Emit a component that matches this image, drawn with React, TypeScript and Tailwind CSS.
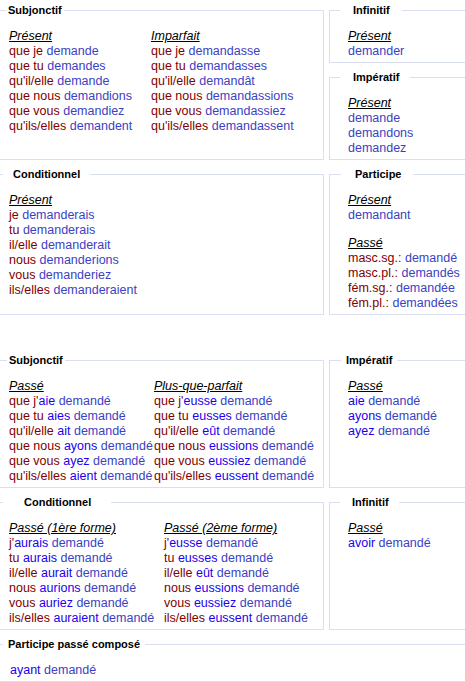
import React from 'react';

type Line = [string, string, string];

const Conj: React.FC<{ line: Line }> = ({ line }) => (
  <div className="whitespace-pre">
    <span className="text-[#800000]">{line[0]}</span>
    {line[1] && <span className="text-[#2200ee]">{line[1]}</span>}
    <span className="text-[#3b42c2]">{line[2]}</span>
  </div>
);

const Label: React.FC<{ children: React.ReactNode }> = ({ children }) => (
  <div className="italic underline text-black whitespace-pre">{children}</div>
);

const Block: React.FC<{ title: string; lines: Line[] }> = ({ title, lines }) => (
  <div>
    <Label>{title}</Label>
    {lines.map((l, i) => (
      <Conj key={i} line={l} />
    ))}
  </div>
);

const Box: React.FC<{
  legend: string;
  legendClass: string;
  className?: string;
  bodyClass?: string;
  children: React.ReactNode;
}> = ({ legend, legendClass, className = '', bodyClass = 'pl-[9px]', children }) => (
  <fieldset className={`border border-[#dadff0] ${className}`}>
    <legend className={`text-[11px] leading-[13px] font-bold text-black ${legendClass}`}>{legend}</legend>
    <div className={`pt-[12px] pb-[3px] ${bodyClass}`}>{children}</div>
  </fieldset>
);

const subjPresent: Line[] = [
  ['que je ', '', 'demande'],
  ['que tu ', '', 'demandes'],
  ["qu'il/elle ", '', 'demande'],
  ['que nous ', '', 'demandions'],
  ['que vous ', '', 'demandiez'],
  ["qu'ils/elles ", '', 'demandent'],
];

const subjImparfait: Line[] = [
  ['que je ', '', 'demandasse'],
  ['que tu ', '', 'demandasses'],
  ["qu'il/elle ", '', 'demandât'],
  ['que nous ', '', 'demandassions'],
  ['que vous ', '', 'demandassiez'],
  ["qu'ils/elles ", '', 'demandassent'],
];

const condPresent: Line[] = [
  ['je ', '', 'demanderais'],
  ['tu ', '', 'demanderais'],
  ['il/elle ', '', 'demanderait'],
  ['nous ', '', 'demanderions'],
  ['vous ', '', 'demanderiez'],
  ['ils/elles ', '', 'demanderaient'],
];

const subjPasse: Line[] = [
  ["que j'", 'aie ', 'demandé'],
  ['que tu ', 'aies ', 'demandé'],
  ["qu'il/elle ", 'ait ', 'demandé'],
  ['que nous ', 'ayons ', 'demandé'],
  ['que vous ', 'ayez ', 'demandé'],
  ["qu'ils/elles ", 'aient ', 'demandé'],
];

const subjPlusQue: Line[] = [
  ["que j'", 'eusse ', 'demandé'],
  ['que tu ', 'eusses ', 'demandé'],
  ["qu'il/elle ", 'eût ', 'demandé'],
  ['que nous ', 'eussions ', 'demandé'],
  ['que vous ', 'eussiez ', 'demandé'],
  ["qu'ils/elles ", 'eussent ', 'demandé'],
];

const condPasse1: Line[] = [
  ["j'", 'aurais ', 'demandé'],
  ['tu ', 'aurais ', 'demandé'],
  ['il/elle ', 'aurait ', 'demandé'],
  ['nous ', 'aurions ', 'demandé'],
  ['vous ', 'auriez ', 'demandé'],
  ['ils/elles ', 'auraient ', 'demandé'],
];

const condPasse2: Line[] = [
  ["j'", 'eusse ', 'demandé'],
  ['tu ', 'eusses ', 'demandé'],
  ['il/elle ', 'eût ', 'demandé'],
  ['nous ', 'eussions ', 'demandé'],
  ['vous ', 'eussiez ', 'demandé'],
  ['ils/elles ', 'eussent ', 'demandé'],
];

export default function App() {
  return (
    <div className="w-[465px] h-[682px] overflow-hidden bg-white pt-1 text-[12.5px] leading-[15px] font-['Liberation_Sans',Arial,sans-serif]">
      {/* simple tenses */}
      <div className="flex gap-[5px]">
        <Box legend="Subjonctif" legendClass="ml-[6px] px-[2px]" className="w-[324px] border-l-0">
          <div className="grid grid-cols-[142px_1fr]">
            <Block title="Présent" lines={subjPresent} />
            <Block title="Imparfait" lines={subjImparfait} />
          </div>
        </Box>
        <div className="flex-1 flex flex-col gap-2">
          <Box legend="Infinitif" legendClass="ml-[10px] pl-[13px] pr-[12px]" className="border-r-0" bodyClass="pl-[18px]">
            <Block title="Présent" lines={[['', '', 'demander']]} />
          </Box>
          <Box legend="Impératif" legendClass="ml-[10px] pl-[13px] pr-[11px]" className="border-r-0" bodyClass="pl-[18px]">
            <Block title="Présent" lines={[['', '', 'demande'], ['', '', 'demandons'], ['', '', 'demandez']]} />
          </Box>
        </div>
      </div>

      <div className="flex gap-[5px] mt-2">
        <Box legend="Conditionnel" legendClass="ml-[3px] px-[10px]" className="w-[324px] border-l-0">
          <Block title="Présent" lines={condPresent} />
        </Box>
        <Box legend="Participe" legendClass="ml-[11px] pl-[14px] pr-[12px]" className="flex-1 border-r-0" bodyClass="pl-[18px]">
          <Block title="Présent" lines={[['', '', 'demandant']]} />
          <div className="mt-[13px]">
            <Block
              title="Passé"
              lines={[
                ['masc.sg.: ', '', 'demandé'],
                ['masc.pl.: ', '', 'demandés'],
                ['fém.sg.: ', '', 'demandée'],
                ['fém.pl.: ', '', 'demandées'],
              ]}
            />
          </div>
        </Box>
      </div>

      {/* compound tenses */}
      <div className="flex gap-[5px] mt-[39px]">
        <Box legend="Subjonctif" legendClass="ml-[7px] px-[2px]" className="w-[324px] border-l-0">
          <div className="grid grid-cols-[145px_1fr]">
            <Block title="Passé" lines={subjPasse} />
            <Block title="Plus-que-parfait" lines={subjPlusQue} />
          </div>
        </Box>
        <Box legend="Impératif" legendClass="ml-[11px] px-[5px]" className="flex-1 border-r-0" bodyClass="pl-[18px]">
          <Block title="Passé" lines={[['', 'aie ', 'demandé'], ['', 'ayons ', 'demandé'], ['', 'ayez ', 'demandé']]} />
        </Box>
      </div>

      <div className="flex gap-[5px] mt-2">
        <Box legend="Conditionnel" legendClass="ml-[3px] pl-[21px] pr-[20px]" className="w-[324px] border-l-0">
          <div className="grid grid-cols-[155px_1fr]">
            <Block title="Passé (1ère forme)" lines={condPasse1} />
            <Block title="Passé (2ème forme)" lines={condPasse2} />
          </div>
        </Box>
        <Box legend="Infinitif" legendClass="ml-[10px] pl-[12px] pr-[10px]" className="flex-1 border-r-0" bodyClass="pl-[18px]">
          <Block title="Passé" lines={[['', 'avoir ', 'demandé']]} />
        </Box>
      </div>

      <div className="mt-2">
        <Box legend="Participe passé composé" legendClass="ml-[3px] px-[5px]" className="border-x-0" bodyClass="pl-[10px]">
          <Conj line={['', 'ayant ', 'demandé']} />
        </Box>
      </div>
    </div>
  );
}
